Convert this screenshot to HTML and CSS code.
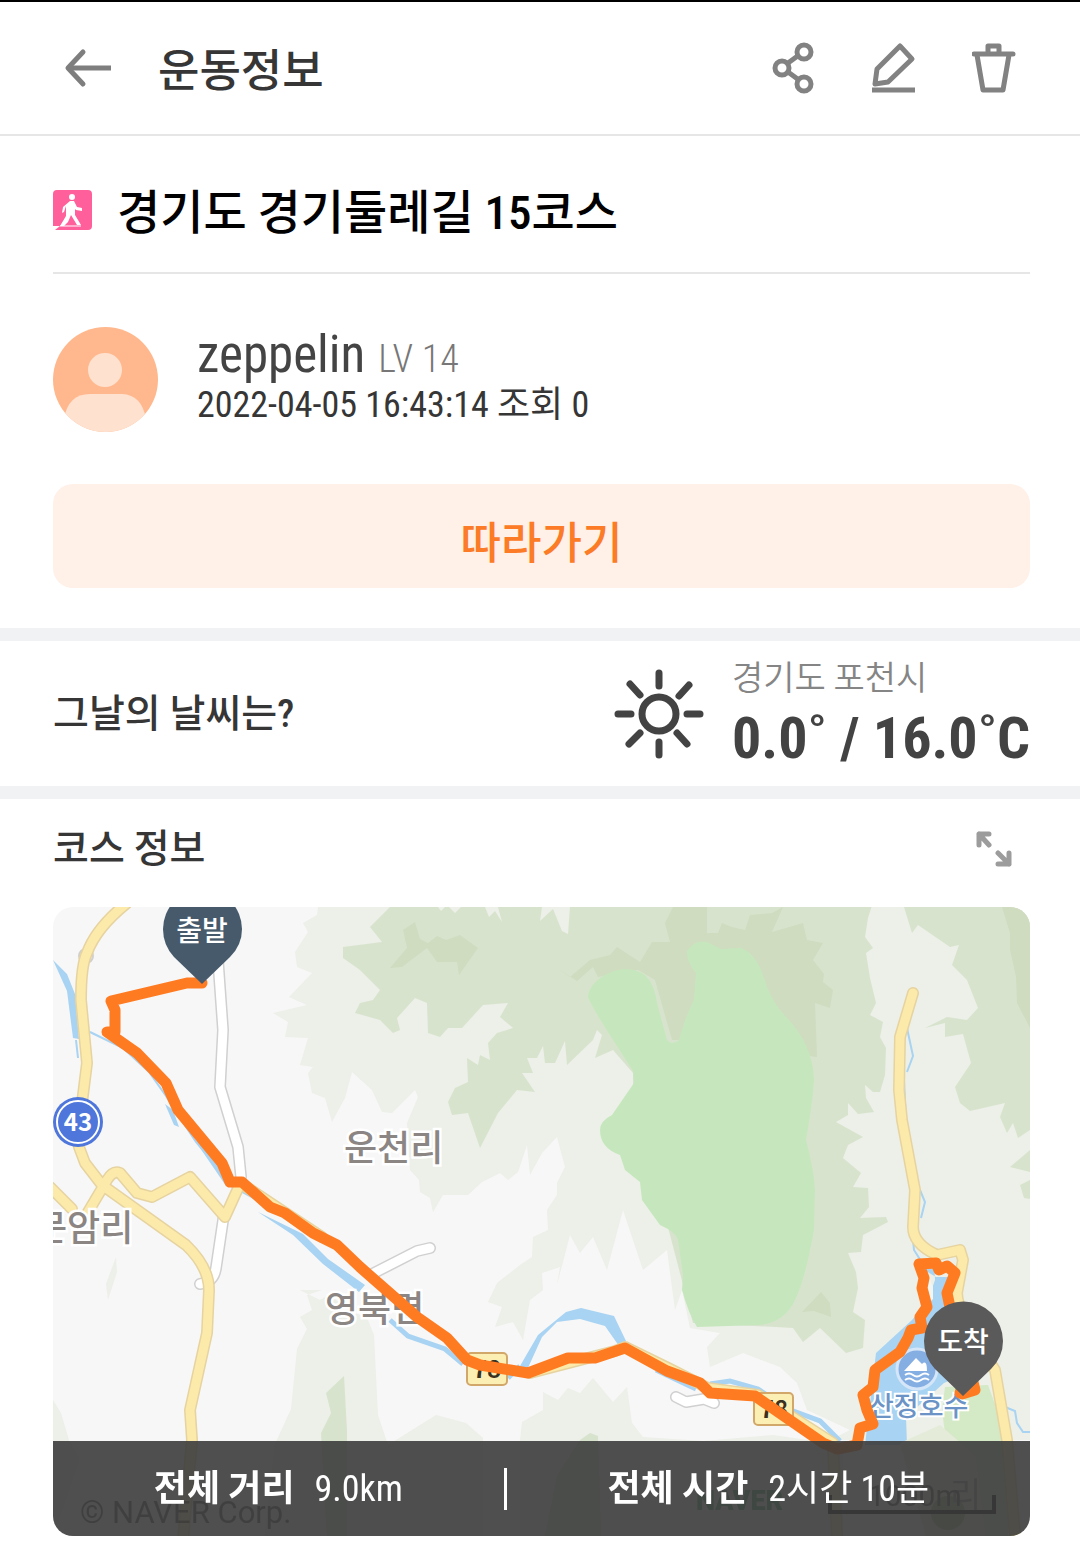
FILE: index.html
```html
<!DOCTYPE html>
<html lang="ko">
<head>
<meta charset="utf-8">
<meta name="viewport" content="width=device-width, initial-scale=1">
<title>운동정보</title>
<link rel="stylesheet" href="styles.css">
</head>
<body>
<header class="topbar">
  <button class="icon-btn back" type="button" aria-label="뒤로">
    <svg width="48" height="40" viewBox="0 0 48 40" fill="none" stroke="#7e7e7e" stroke-width="5"><path d="M47 20H5"/><path d="M19 4L4 20l15 16" stroke-linecap="round" stroke-linejoin="round"/></svg>
  </button>
  <h1 class="topbar-title">운동정보</h1>
  <nav class="actions">
    <button class="icon-btn" type="button" aria-label="공유">
      <svg width="44" height="52" viewBox="0 0 44 52" fill="none" stroke="#828282" stroke-width="5"><circle cx="32" cy="10" r="7"/><circle cx="10" cy="26" r="7"/><circle cx="32" cy="42" r="7"/><path d="M16 21l11-8M16 30l11 8"/></svg>
    </button>
    <button class="icon-btn" type="button" aria-label="수정">
      <svg width="44" height="52" viewBox="0 0 44 52" fill="none" stroke="#828282" stroke-width="5" stroke-linejoin="round"><path d="M28 4l12 13-24 23-13 2 2-15z"/><path d="M0 48h43"/></svg>
    </button>
    <button class="icon-btn" type="button" aria-label="삭제">
      <svg width="44" height="52" viewBox="0 0 44 52" fill="none" stroke="#828282" stroke-width="5" stroke-linejoin="round" stroke-linecap="round"><path d="M2 12h39M16 11V4h11v7M5 13l6 35h20l6-35"/></svg>
    </button>
  </nav>
</header>

<main>
  <section class="summary">
    <div class="course">
      <svg class="walk" width="39" height="40" viewBox="0 0 39 40"><path d="M4 0h31q4 0 4 4v32q0 4-4 4H2l5-4H0V4q0-4 4-4z" fill="#ff5f9b"/><circle cx="19" cy="7" r="3" fill="#fff"/><path d="M17 11h4l3 6 5 1v3l-6-1-1-1v6l6 10h-4l-6-10-3 7-4 4h-4l6-10v-10l-2 6-2 1 1-6z" fill="#fff"/><path d="M7 36h21" stroke="#fff" stroke-width="1"/></svg>
      <h2 class="course-title">경기도 경기둘레길 15코스</h2>
    </div>
    <div class="profile">
      <svg class="avatar" width="105" height="105" viewBox="0 0 105 105"><defs><clipPath id="face"><circle cx="52.5" cy="52.5" r="52.5"/></clipPath></defs><g clip-path="url(#face)"><path d="M0 0h105v105H0z" fill="#ffb88d"/><circle cx="52" cy="43" r="17" fill="#ffe1d0"/><path d="M11 105V92q4-25 26-25h32q20 1 24 25v13z" fill="#ffe1d0"/></g></svg>
      <div>
        <p class="user"><span class="name">zeppelin</span> <span class="level">LV 14</span></p>
        <p class="meta">2022-04-05 16:43:14 조회 0</p>
      </div>
    </div>
    <button class="follow" type="button">따라가기</button>
  </section>

  <section class="weather">
    <h3 class="section-title">그날의 날씨는?</h3>
    <svg class="sun" width="90" height="90" viewBox="0 0 90 90" fill="none" stroke="#434343" stroke-width="7" stroke-linecap="round"><circle cx="45" cy="45" r="17"/><path d="M45 4v13M45 73v13M4 45h13M73 45h13M16 15l10 11M63 64l10 11M75 16L65 27M26 64L15 75"/></svg>
    <div>
      <p class="place">경기도 포천시</p>
      <p class="temp">0.0˚ / 16.0˚C</p>
    </div>
  </section>

  <section class="route">
    <div class="route-head">
      <h3 class="section-title">코스 정보</h3>
      <button class="icon-btn expand" type="button" aria-label="지도 확대">
        <svg width="36" height="36" viewBox="0 0 36 36" fill="none" stroke="#9c9c9c" stroke-width="5" stroke-linecap="round" stroke-linejoin="round"><path d="M13 3H3v11M3 3l10 11M33 22v11H22M33 33L22 22"/></svg>
      </button>
    </div>
    <div class="map">
      <svg class="map-art" viewBox="53 907 977 629" role="img" aria-label="코스 지도">
        <path fill="#f7f7f7" d="M53 907h977v629H53z"/>
        <g fill="#ecf0e8">
          <path d="M318 907l-1 8-14 8 5 9-13 20 2 15 15 6-23 24 18 8-34 8 15 9-3 15 23 1-8 27 13 2-5 6 4 20 13 5 7 24 13-24 7-26 20 18 10 22 10 1 23-23 3 7-11 26 3 47 9 10 1 12 10 6 3 14 10-17h25l14-13 18-9 8 7 10-8 9-27 3 30 12-22 15-16 8 30-8 16v12l-10 15 1 20-15 7-1 20-12 8-23 18-9 19 14 5-7 20 18-5 10 18 7-40 13-10-1-17 18-6-3 18 13-50 10 18 13-16 14 33 16-60 20 60 24-20 8 60 7-20 8 38 30 5-13 14 3 20 33-14 37 14 17 16 10 27 43 20-20 10h200V907z"/>
          <path d="M520 1536v-96l2-18 21-12v-18l15 8 10-12 12 5 13-15 10 12 10 12 14-15 5 36 11 14 60 4 70-6 70 10v101z"/>
          <path d="M300 1290l20 10 8-5 40 25 6 15 4 80 10 30 48-30 30 8 17 15v98H265l10-92 16-35 6-60 10-20-7-12 12-7-5-15 15-5z"/>
          <path d="M53 1400l8 13 8 27 10 20-26 76z"/><path d="M116 1257l-10 27 2 16 9-28z"/>
        </g>
        <g fill="#d8e3cd">
          <path d="M390 907l-20 20 12 15-39 5v11l17 12 20 20-7 10-13 3-5 10 25 7 13 13 7-3-3-12 18-20 12 5 1 30 12 4 8-9h14l21-23 25-2-8 14 13 11-16 5-9 10 2 17-10-5-2 10-11-7 1 24-13 6-7 14 4 13 16-2 12 35 18-35 19-23 18 2-13-19h11l-6-15h10l6-12 2 17h10l10-22 2 24 26-25 4-10 5 5-7 23 18-8 20 23v20l60 230 83 4 17 1 10 14 17-14 26 25 17-5 2-28-12-8 5-24-2-16-8-19 13-1 2-17 25-13-2-5-26 1 9-11-1-19-15-1 8-14-18-15 5-13 15-8-27-15 12-7v-12l10 11 16-2-8-14-1-13 8 7h7l5-17 1-27-6-11 3-15-13-7 6-12-6-25-4-25 7-5-8-11 3-19 5-16z"/>
          <path d="M904 907l8 26 6-8 32 22 9-2-7 20 15 15 11 28-11 12-20-3-22 11 20-5v14l18-3 8 29-16 24 5 16 10 8 35-8-5 14 7 16 6-10 5 15 12-8V907zM1030 1150l-20 17 20 5zM1030 1180l-10 5 4 13 6 1z"/>
          <path d="M344 1376l-18 17 5 20-10 20 6 103h20v-105zM580 1440l10-7 8 3 3 100h-56l12-60z"/>
        </g>
        <g fill="#ecf0e8"><path d="M438 907l3 4 4-4zM449 907l6 6 6-6zM485 907l4 10 6-6 7 11-4-15zM542 907l-2 14 13-12 9 22 6 3 2-27z"/></g>
        <g fill="#cfdcc0">
          <path d="M415 922l-12 8 4 18-17 20 12-1 25-19 10 14h20l2 13 19-27-18-13-14 5-9-4-9 7-8-4z"/>
          <path d="M557 968l20 13 16-14 5 10 40-7 17 10 17 60h8l137 17-2-54 15 5 3-18-10-8 1-8-11-14 10-17-16-3-4-17-31 9 11-25-11 6-22 2-5 15-13-3-10-4-4 10h-11V907h-34l-8 16 5 19h-18l-12 20-23-15-7 8-20 5-20 17z"/>
          <path d="M1002 907l8 26v17l6 27 1 26 13 25V907zM821 1292l-19 20 12-1 17 6-1-14z"/>
        </g>
        <path fill="#c6e7bd" d="M588 997q1-13 17-22 22-12 40 0 10 10 12 28l10 37q5 6 12 0 5-20 15-40 1-15 2-27-10-12-9-22 8-12 20-9l14 7 20-1q14 5 22 27 7 26 24 43 26 27 27 62-1 20-8 60 8 30 9 50l-1 40q-9 50-19 70-10 22-35 25l-63 2q-8-12-15-37l1-15-5-35q-2-8-18-15l-18-25-2-18-15-12-5-15q-20-7-20-25 0-9 12-15l22-32-1-12-18-28q-24-37-27-46z"/>

        <g fill="none" stroke="#a8d3f2">
          <path d="M90 1032l33 16 26 24 17 24 14 22 16 24 20 24 15 20 30 16 25 14" stroke-width="2"/>
          <path d="M76 1040l2 18M907 1028l6 28-6 16M904 1080l2 44M920 1190l5 12-4 16M912 1230l2 20 14 22M1000 1405l15 6 2 12 6 9h7" stroke-width="2"/>
          <path d="M390 1320l18 16 37 13 18 15M508 1378l12-12M656 1370l40 19M710 1384l20-3 28 8 30 20 32 12 20 20" stroke-width="5"/>
        </g>
        <g fill="#a8d3f2">
          <path d="M53 960l14 14 8 20 4 45-6-1-6-47zM165 1104l8 6 6 17-5-2zM196 1142l6-2 28 44-4 2zM258 1212l45 22 25 25 37 26-6 7-36-28-30-29z"/>
          <path d="M520 1366l18-31 28-23 15-4 33 8 12 25-7 5-14-20-25-7-23 3-15 15-15 33zM926 1271l10 6 12 0 6 30 20 63-30 13-38 34 1 28h-42l11-92 36-33 15-17 8-23-1-20z"/>
          <path d="M975 1390l12 4 6 12-8-2z"/>
        </g>
        <path fill="#f3f6f0" d="M928 1275l5 12 0 12-4 4z"/>
        <path fill="#d4e9c5" d="M945 1387l43-2 20 55v96h-50l-16-126z"/>
        <path fill="#e4ecd9" d="M940 1425l-40 18 26 93h60l-10-80z"/>

        <g fill="none" stroke-linejoin="round" stroke-linecap="round">
          <path d="M218 960l5 70-3 57 18 60 3 30M224 1214l-8 54q-2 14-16 16M372 1274l45-23 13-3M676 1397l10 5 18-3 10 4" stroke="#d0d0d0" stroke-width="12"/>
          <path d="M218 960l5 70-3 57 18 60 3 30M224 1214l-8 54q-2 14-16 16M372 1274l45-23 13-3M676 1397l10 5 18-3 10 4" stroke="#fff" stroke-width="9"/>
          <circle cx="86" cy="956" r="7" stroke="#d0d0d0" stroke-width="2"/>
          <path d="M127 903q-31 25-40 50-6 12-6 47l6 63-5 40-3 44 6 16 17 22 84 60q23 22 23 45l-2 43-17 77 2 30-9 100M50 1187l22 22M88 1212l19-32q6-10 13-7l17 20 15 4 38-20 35 40 15-33M242 1184l30 20 50 33M530 1373l85-22 10-4 43 21 40 20 50 7 75 48 4 94M913 993l-13 44-1 53 3 30 13 70-2 37q0 17 24 28l23-5 3 10-6 33q0 20 38 77l12 70 8 96" stroke="#e6d3a0" stroke-width="12"/>
          <path d="M127 903q-31 25-40 50-6 12-6 47l6 63-5 40-3 44 6 16 17 22 84 60q23 22 23 45l-2 43-17 77 2 30-9 100M50 1187l22 22M88 1212l19-32q6-10 13-7l17 20 15 4 38-20 35 40 15-33M242 1184l30 20 50 33M530 1373l85-22 10-4 43 21 40 20 50 7 75 48 4 94M913 993l-13 44-1 53 3 30 13 70-2 37q0 17 24 28l23-5 3 10-6 33q0 20 38 77l12 70 8 96" stroke="#fbeaaa" stroke-width="9"/>
        </g>

        <g class="place-label">
          <text x="344" y="1161">운천리</text>
          <text x="34" y="1241">문암리</text>
          <text x="325" y="1322">영북면</text>
        </g>
        <circle cx="78" cy="1122" r="25" fill="#4f77db"/><circle cx="78" cy="1122" r="21" fill="none" stroke="#fff" stroke-width="2"/>
        <text class="road-no" x="78" y="1131">43</text>
        <g fill="#fcefb4" stroke="#d2a76a" stroke-width="2"><rect x="467" y="1353" width="40" height="32" rx="4"/><rect x="754" y="1393" width="39" height="32" rx="4"/></g>
        <text class="route-no" x="487" y="1378">78</text>
        <text class="route-no" x="774" y="1418">78</text>
        <circle cx="917" cy="1369" r="20" fill="#85aee2" stroke="#d5e6f8" stroke-width="3"/>
        <path d="M904 1371l12-13 6 6q5-5 5 7z" fill="#fff"/><path d="M905 1375q4-3 8 0t8 0 8 0M905 1380q4-3 8 0t8 0 8 0" fill="none" stroke="#fff" stroke-width="2"/>
        <text class="lake-label" x="869" y="1416">산정호수</text>

        <path fill="none" stroke="#ff7b22" stroke-width="11" stroke-linejoin="round" stroke-linecap="round" d="M202 983h-15l-76 18 4 9v22h-8l30 21 29 30 12 27 44 53 8 19h12l28 25 15 6 28 20 24 12 23 22 57 50 30 21 20 22 13 5 48 8 40-15h27l30-10 42 23 33 12 10 10 45 3 68 47 14 6L857 1445 860 1428 873 1424 867 1410 863 1395 873 1387 875 1370 900 1352 908 1338 911 1330 922 1328 920 1317 927 1307 922 1288 924 1278 919 1264 936 1263 939 1270 947 1266 955 1273 947 1293 951 1312M960 1393l2-6M962 1394l13-4-2-8"/>
        <path fill="#465a6c" d="M202 984l-28-27q-11-12-11-28a39 39 0 0 1 79 0q0 16-12 28z"/>
        <text class="pin-label" x="202" y="941">출발</text>
        <path fill="#5a5a5a" d="M963 1396l-28-27q-11-12-11-28a39 39 0 0 1 79 0q0 16-12 28z"/>
        <text class="pin-label" x="963" y="1352">도착</text>

        <g opacity=".7">
          <text class="credit" x="80" y="1523">© NAVER Corp.</text>
          <rect x="684" y="1480" width="120" height="40" rx="20" fill="#fff" opacity=".5"/>
          <text class="naver" x="696" y="1510">NAVER</text>
          <circle cx="948" cy="1513" r="17" fill="#80a868"/>
          <text class="village" x="950" y="1507">리</text>
          <text class="scale" x="868" y="1506">1000m</text>
        </g>
        <path d="M830 1495v17h164v-17" fill="none" stroke="#111" stroke-width="4"/>
      </svg>
      <dl class="stats">
        <div class="stat"><dt>전체 거리</dt><dd>9.0km</dd></div>
        <div class="bar" role="presentation"></div>
        <div class="stat"><dt>전체 시간</dt><dd>2시간 10분</dd></div>
      </dl>
    </div>
  </section>
</main>
</body>
</html>
```

FILE: styles.css
```css
* { box-sizing: border-box; }

body {
  margin: 0;
  border-top: 2px solid #000;
  background: #fff;
  color: #363636;
  font-family: "Roboto Condensed", "Noto Sans CJK KR", sans-serif;
}

h1, h2, h3, p, dl, dd { margin: 0; }

button { border: 0; font: inherit; cursor: pointer; }

svg { display: block; }

.icon-btn { padding: 0; background: none; }

.topbar {
  display: flex;
  align-items: center;
  height: 134px;
  padding: 0 64px;
  border-bottom: 2px solid #e6e6e6;
}

.topbar-title {
  margin-left: 46px;
  padding-top: 8px;
  font-size: 45px;
  font-weight: 500;
  line-height: 64px;
}

.actions {
  display: flex;
  gap: 56px;
  margin-left: auto;
}

.summary { padding: 0 50px 40px 53px; }

.course {
  display: flex;
  align-items: center;
  gap: 25px;
  height: 138px;
  padding-top: 12px;
  border-bottom: 2px solid #e6e6e6;
}

.course-title {
  padding-top: 6px;
  color: #000;
  font-size: 47px;
  font-weight: 500;
  line-height: 64px;
}

.profile {
  display: flex;
  align-items: center;
  gap: 39px;
  height: 210px;
}

.user {
  display: flex;
  align-items: baseline;
  gap: 13px;
  line-height: 48px;
}

.name { color: #444; font-size: 51px; font-weight: 400; }

.level { color: #777; font-size: 38px; font-weight: 300; }

.meta { font-size: 36px; font-weight: 400; line-height: 44px; }

.follow {
  display: block;
  width: 100%;
  height: 104px;
  padding: 8px 0 0;
  border-radius: 20px;
  background: #fff0e8;
  color: #fb7b26;
  font-size: 44px;
  font-weight: 500;
}

.weather {
  display: flex;
  align-items: center;
  height: 171px;
  padding: 0 50px 0 53px;
  border: solid #f0f2f4;
  border-width: 13px 0;
}

.section-title {
  font-size: 39px;
  font-weight: 500;
  line-height: 56px;
}

.sun { margin: 0 28px 0 auto; }

.place { color: #858585; font-size: 34px; font-weight: 350; line-height: 48px; }

.temp {
  color: #434343;
  font-size: 58px;
  font-weight: 700;
  line-height: 72px;
}

.route { padding: 0 50px 26px 53px; }

.route-head {
  display: flex;
  align-items: center;
  justify-content: space-between;
  height: 108px;
  padding: 0 18px 8px 0;
}

.map {
  position: relative;
  overflow: hidden;
  border-radius: 20px;
}

.map-art {
  width: 100%;
  height: auto;
  font-family: "Noto Sans CJK KR", sans-serif;
}

.place-label {
  fill: #8b8583;
  stroke: #fff;
  stroke-width: 5px;
  paint-order: stroke;
  font-size: 36px;
  font-weight: 500;
}

.lake-label {
  fill: #6c93c6;
  stroke: #fff;
  stroke-width: 4px;
  paint-order: stroke;
  font-size: 27px;
  font-weight: 500;
}

.road-no { fill: #fff; font-size: 24px; font-weight: 700; text-anchor: middle; }

.route-no { fill: #3a3020; font-size: 24px; font-weight: 700; text-anchor: middle; }

.pin-label { fill: #fff; font-size: 28px; font-weight: 500; text-anchor: middle; }

.credit { fill: #222; font-family: Roboto, sans-serif; font-size: 31px; }

.naver { fill: #168a45; font-family: Roboto, sans-serif; font-size: 27px; font-weight: 900; }

.village { fill: #777; font-size: 34px; }

.scale { fill: #222; font-family: Roboto, sans-serif; font-size: 30px; }

.stats {
  position: absolute;
  right: 0;
  bottom: 0;
  left: 0;
  display: flex;
  align-items: center;
  justify-content: space-evenly;
  height: 95px;
  background: rgba(60, 60, 60, 0.9);
  color: #fff;
  font-size: 36px;
  line-height: 52px;
}

.stat { display: flex; gap: 20px; }

.stat dt { font-weight: 700; }

.bar { width: 3px; height: 42px; background: #fff; }
```
